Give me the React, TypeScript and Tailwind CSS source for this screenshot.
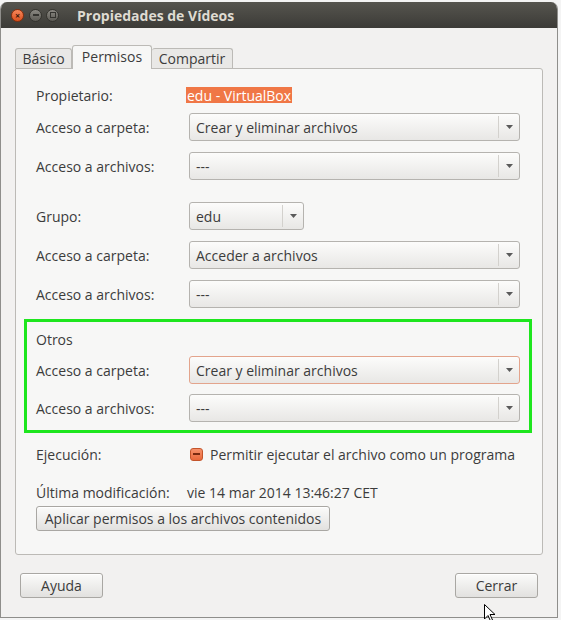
import React from "react";

// small dropdown arrow used in the combo boxes
const Arrow = () => (
  <svg width="7" height="4" viewBox="0 0 7 4">
    <polygon points="0,0 7,0 3.5,4" fill="#5a5a5a" />
  </svg>
);

const Combo = ({
  value,
  small,
  focused,
}: {
  value: string;
  small?: boolean;
  focused?: boolean;
}) => {
  return (
    <div
      className={`flex h-[28px] items-center rounded-[3px] border bg-gradient-to-b from-[#fcfcfb] to-[#e8e7e5] ${
        small ? "w-[115px]" : "w-[331px]"
      } ${focused ? "border-[#e3a48c]" : "border-[#b5b3af]"}`}
    >
      <span className="flex-1 whitespace-nowrap pl-[6px] text-[14px] text-[#3c3c3c]">{value}</span>
      <span className="h-[22px] w-px bg-[#d3d1cd]" />
      <span className="flex w-[20px] justify-center">
        <Arrow />
      </span>
    </div>
  );
};

const Row = ({ label, children }: { label: string; children: React.ReactNode }) => (
  <div className="flex h-[28px] items-center">
    <span className="w-[153px] text-[14px] text-[#3c3c3c]">{label}</span>
    <div className="flex items-center">{children}</div>
  </div>
);

const Button = ({ label, width }: { label: string; width: string }) => (
  <button
    className={`flex items-center justify-center rounded-[3px] border border-[#a9a7a3] bg-gradient-to-b from-[#fbfbfa] to-[#e2e1df] text-[14px] text-[#3c3c3c] shadow-[inset_0_1px_0_#ffffff] ${width}`}
  >
    {label}
  </button>
);

const App = () => {
  return (
    <div className="relative h-[620px] w-[561px] overflow-hidden bg-[#f4f4f4] font-['Open_Sans',sans-serif]">
      <div className="mt-[2px] flex h-[616px] w-[558px] flex-col overflow-hidden rounded-t-[7px] border-x border-b border-[#8f8e8b] bg-[#f2f1f0]">
        {/* Title bar */}
        <div className="flex h-[26px] items-center bg-gradient-to-b from-[#56554f] to-[#3c3b37]">
          <div className="ml-[10px] flex items-center gap-[4px]">
            <span className="flex h-[13px] w-[13px] items-center justify-center rounded-full border border-[#8a2e0c] bg-gradient-to-b from-[#f6875a] to-[#d9501c] text-[9px] font-bold leading-none text-[#3b1a0c]">
              ×
            </span>
            <span className="ml-[1px] flex h-[13px] w-[13px] items-center justify-center rounded-full border border-[#35342f] bg-gradient-to-b from-[#8a8882] to-[#5d5b55]">
              <span className="h-[2px] w-[6px] bg-[#34332f]" />
            </span>
            <span className="flex h-[13px] w-[13px] items-center justify-center rounded-full border border-[#35342f] bg-gradient-to-b from-[#8a8882] to-[#5d5b55]">
              <span className="h-[6px] w-[6px] border border-[#34332f]" />
            </span>
          </div>
          <span className="ml-[18px] text-[14px] font-bold text-[#dfdbd2]">Propiedades de Vídeos</span>
        </div>

        {/* Body */}
        <div className="flex flex-1 flex-col px-[14px] pt-[16px]">
          {/* Tabs */}
          <div className="relative z-10 flex h-[24px] items-end">
            <div className="flex h-[20px] w-[57px] items-center justify-center rounded-t-[3px] border border-b-0 border-[#bcbab6] bg-[#e9e8e6] text-[14px] text-[#3c3c3c]">
              Básico
            </div>
            <div className="-mb-px flex h-[24px] w-[80px] items-center justify-center rounded-t-[3px] border border-b-0 border-[#bcbab6] bg-[#f7f7f6] pb-[2px] text-[14px] text-[#3c3c3c]">
              Permisos
            </div>
            <div className="flex h-[20px] w-[81px] items-center justify-center rounded-t-[3px] border border-b-0 border-l-0 border-[#bcbab6] bg-[#e9e8e6] text-[14px] text-[#3c3c3c]">
              Compartir
            </div>
          </div>

          {/* Notebook page */}
          <div className="flex h-[487px] flex-col rounded-b-[3px] rounded-tr-[3px] border border-[#bcbab6] bg-[#f7f7f6] pl-[20px] pr-[22px] pt-[16px]">
            <div className="flex h-[20px] items-center">
              <span className="w-[153px] text-[14px] text-[#3c3c3c]">Propietario:</span>
              <span className="-ml-[3px] flex h-[16px] items-center bg-[#f07746] px-[1px] text-[14px] text-white">
                edu - VirtualBox
              </span>
            </div>
            <div className="mt-[8px] flex flex-col gap-[11px]">
              <Row label="Acceso a carpeta:">
                <Combo value="Crear y eliminar archivos" />
              </Row>
              <Row label="Acceso a archivos:">
                <Combo value="---" />
              </Row>
            </div>

            <div className="mt-[22px] flex flex-col gap-[11px]">
              <Row label="Grupo:">
                <Combo value="edu" small />
              </Row>
              <Row label="Acceso a carpeta:">
                <Combo value="Acceder a archivos" />
              </Row>
              <Row label="Acceso a archivos:">
                <Combo value="---" />
              </Row>
            </div>

            {/* highlighted "Otros" group */}
            <div className="-mx-[12px] mt-[11px] flex flex-col border-[3px] border-[#1ee61e] px-[9px] pb-[8px] pt-[7px]">
              <div className="flex h-[20px] items-center text-[14px] text-[#3c3c3c]">Otros</div>
              <div className="mt-[7px] flex flex-col gap-[10px]">
                <Row label="Acceso a carpeta:">
                  <Combo value="Crear y eliminar archivos" focused />
                </Row>
                <Row label="Acceso a archivos:">
                  <Combo value="---" />
                </Row>
              </div>
            </div>

            <div className="mt-[11px] flex h-[20px] items-center">
              <span className="w-[153px] text-[14px] text-[#3c3c3c]">Ejecución:</span>
              <span className="ml-[1px] flex h-[13px] w-[13px] items-center justify-center rounded-[3px] border border-[#c4552b] bg-gradient-to-b from-[#f6916a] to-[#e9683a]">
                <span className="h-[2px] w-[7px] bg-[#7a2a10]" />
              </span>
              <span className="ml-[7px] text-[14px] text-[#3c3c3c]">
                Permitir ejecutar el archivo como un programa
              </span>
            </div>

            <div className="mt-[18px] flex h-[20px] items-center text-[14px] text-[#3c3c3c]">
              <span className="w-[151px]">Última modificación:</span>
              <span>vie 14 mar 2014 13:46:27 CET</span>
            </div>

            <div className="mt-[4px]">
              <Button label="Aplicar permisos a los archivos contenidos" width="h-[25px] w-[294px]" />
            </div>
          </div>

          {/* Dialog buttons */}
          <div className="mt-[18px] flex justify-between px-[5px]">
            <Button label="Ayuda" width="h-[25px] w-[83px]" />
            <Button label="Cerrar" width="h-[25px] w-[83px]" />
          </div>
        </div>
      </div>

      {/* mouse pointer */}
      <svg className="absolute left-[484px] top-[604px]" width="12" height="18" viewBox="0 0 12 18">
        <path d="M0.5 0.5 L0.5 15 L4 11.5 L6.5 17 L8.5 16 L6 10.5 L11 10.5 Z" fill="#ffffff" stroke="#000000" strokeWidth="1" />
      </svg>
    </div>
  );
};

export default App;
